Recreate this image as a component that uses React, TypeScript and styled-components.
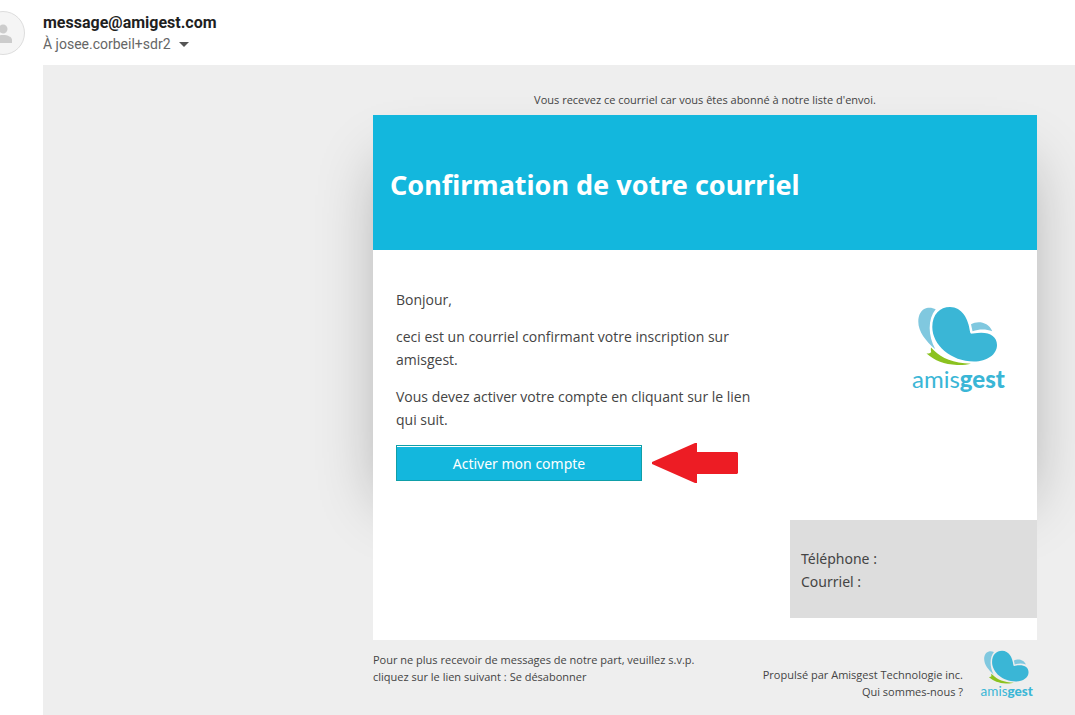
import React from "react";
import styled, { createGlobalStyle } from "styled-components";

const sans = `"Noto Sans", "Open Sans", sans-serif`;
const compact = `"Open Sans", "Noto Sans", sans-serif`;

const GlobalStyle = createGlobalStyle`
  *, *::before, *::after { box-sizing: border-box; }
  body { margin: 0; background: #fff; color: #444; font-family: ${sans}; }
  h1, p, address { margin: 0; font-style: normal; }
`;

const Page = styled.div`
  display: flex;
  flex-direction: column;
  min-height: 100vh;
  overflow: hidden;
`;

const Sender = styled.header`
  display: flex;
  align-items: flex-start;
  height: 65px;
  padding-top: 11px;
  font-family: Roboto, sans-serif;
`;

const Avatar = styled.svg`
  flex: none;
  width: 44px;
  height: 44px;
  margin-left: -19px;
`;

const SenderText = styled.div`
  margin-left: 18px;
`;

const SenderName = styled.p`
  font-size: 16px;
  line-height: 23px;
  font-weight: 700;
  color: #1f1f1f;
`;

const Recipient = styled.button`
  display: flex;
  align-items: center;
  gap: 8px;
  padding: 0;
  border: 0;
  background: none;
  font: 14px/20px Roboto, sans-serif;
  color: #666;
`;

const Caret = styled.span`
  border: 5px solid transparent;
  border-top-color: #555;
  border-bottom-width: 0;
`;

const Message = styled.main`
  flex: 1;
  display: flex;
  justify-content: flex-end;
  margin-left: 43px;
  padding: 26px 38px 12px;
  background: #eee;
`;

const Column = styled.div`
  width: 100%;
  max-width: 664px;
`;

const Note = styled.p`
  padding-bottom: 6px;
  font-family: ${compact};
  font-size: 11px;
  line-height: 18px;
  text-align: center;
`;

const Card = styled.article`
  position: relative;
  background: #fff;

  &::before {
    content: "";
    position: absolute;
    z-index: 0;
    inset: 50px 10px 140px;
    box-shadow: 0 0 60px rgba(0, 0, 0, 0.3);
  }
`;

const Banner = styled.div`
  position: relative;
  padding: 50px 17px 45px;
  background: #13b7dd;
`;

const Title = styled.h1`
  font-size: 27px;
  line-height: 40px;
  font-weight: 700;
  color: #fff;
`;

const Content = styled.div`
  position: relative;
  display: grid;
  grid-template-columns: 1fr 247px;
  min-height: 390px;
  background: #fff;
`;

const Body = styled.div`
  display: flex;
  flex-direction: column;
  gap: 14px;
  padding: 38px 23px;
  font-family: ${compact};
  font-size: 14px;
  line-height: 23px;
`;

const Action = styled.div`
  display: flex;
  align-items: center;
  gap: 10px;
`;

const ActivateButton = styled.button`
  flex: none;
  width: 246px;
  height: 36px;
  padding: 2px 0 0;
  border: 1px solid #0f9fa8;
  background: #13b7dd;
  box-shadow: inset 0 1px #fff;
  font: 14px/24px ${sans};
  color: #fff;
`;

const Arrow = styled.svg`
  flex: none;
  width: 86px;
  height: 40px;
  margin: -2px 0;
`;

const Side = styled.aside`
  display: flex;
  flex-direction: column;
  justify-content: space-between;
  padding: 52px 0 22px;
`;

const Logo = styled.svg<{ $small?: boolean }>`
  flex: none;
  width: ${(p) => (p.$small ? 62 : 100)}px;
  height: ${(p) => (p.$small ? 53 : 94)}px;
`;

const SideLogo = styled.div`
  display: flex;
  justify-content: flex-end;
  padding-right: 30px;
`;

const Contact = styled.address`
  padding: 27px 11px 25px;
  background: #ddd;
  font-size: 14px;
  line-height: 23px;
`;

const Footer = styled.footer`
  display: flex;
  justify-content: space-between;
  padding-top: 8px;
  font-family: ${compact};
  font-size: 11px;
  line-height: 17px;
`;

const Unsubscribe = styled.p`
  padding-top: 3px;
`;

const Powered = styled.div`
  display: flex;
  gap: 12px;
`;

const PoweredText = styled.p`
  padding-top: 18px;
  text-align: right;
`;

const Link = styled.a`
  color: inherit;
  text-decoration: none;
`;

function AmisgestLogo({ small }: { small?: boolean }) {
  return (
    <Logo $small={small} viewBox="0 0 100 94" role="img" aria-label="amisgest">
      <path fill="#80c8df" d="M28.7 7.3C26 5.5 22 5.3 19.7 6 14 7.6 11.3 13 11.3 19.7c0 10 7.5 19.3 17 27.6C21 34 20.5 17 28.7 7.3Z" />
      <path fill="#80c8df" d="M64 22.3c6-3.5 17-3 21.3 7C79 27 72.5 27 65.5 29.2Z" />
      <path fill="#3ab6d6" d="M25.3 25C25.3 12 33 5 43 5c12 0 18.5 12 20 24.5.3 2 1 2.5 3 2.1C80 28.5 90 33 90 43c0 9.500-10 16.500-23 16.500C44 59.500 25.300 43 25.300 25Z" />
      <path fill="#8bc220" d="M24 45.500l3 3C35 56.500 46 61 64 61.700c-4 1-8 1.300-14 1.200-13-.5-22-4-30.500-11.400 2 .2 3.500-.2 4.700-1.200-.4-1.800-.5-3-.2-4.800Z" />
      <text x="5" y="86" fill="#3ab6d6" fontFamily="Lato, sans-serif" fontSize="24">
        amis<tspan fontWeight="900">gest</tspan>
      </text>
    </Logo>
  );
}

export default function App() {
  return (
    <>
      <GlobalStyle />
      <Page>
        <Sender>
          <Avatar viewBox="0 0 44 44" aria-hidden="true">
            <circle cx="22" cy="22" r="21.5" fill="#f5f5f5" stroke="#ddd" />
            <circle cx="22" cy="18" r="4.5" fill="#ccc" />
            <path fill="#ccc" d="M12 32v-3c0-3 5-5 10-5s9 2 9 5v3Z" />
          </Avatar>
          <SenderText>
            <SenderName>message@amigest.com</SenderName>
            <Recipient type="button">
              À josee.corbeil+sdr2
              <Caret />
            </Recipient>
          </SenderText>
        </Sender>
        <Message>
          <Column>
            <Note>Vous recevez ce courriel car vous êtes abonné à notre liste d'envoi.</Note>
            <Card>
              <Banner>
                <Title>Confirmation de votre courriel</Title>
              </Banner>
              <Content>
                <Body>
                  <p>Bonjour,</p>
                  <p>
                    ceci est un courriel confirmant votre inscription sur
                    <br />
                    amisgest.
                  </p>
                  <p>
                    Vous devez activer votre compte en cliquant sur le lien
                    <br />
                    qui suit.
                  </p>
                  <Action>
                    <ActivateButton type="button">Activer mon compte</ActivateButton>
                    <Arrow viewBox="0 0 86 40" aria-hidden="true">
                      <path fill="#ed1c24" d="M0 19l43-19h2v9h40l1 1v20l-1 1H45v9h-2L0 21Z" />
                    </Arrow>
                  </Action>
                </Body>
                <Side>
                  <SideLogo>
                    <AmisgestLogo />
                  </SideLogo>
                  <Contact>
                    <p>Téléphone :</p>
                    <p>Courriel :</p>
                  </Contact>
                </Side>
              </Content>
            </Card>
            <Footer>
              <Unsubscribe>
                Pour ne plus recevoir de messages de notre part, veuillez s.v.p.
                <br />
                cliquez sur le lien suivant : <Link href="#desabonner">Se désabonner</Link>
              </Unsubscribe>
              <Powered>
                <PoweredText>
                  Propulsé par Amisgest Technologie inc.
                  <br />
                  <Link href="#a-propos">Qui sommes-nous ?</Link>
                </PoweredText>
                <AmisgestLogo small />
              </Powered>
            </Footer>
          </Column>
        </Message>
      </Page>
    </>
  );
}
